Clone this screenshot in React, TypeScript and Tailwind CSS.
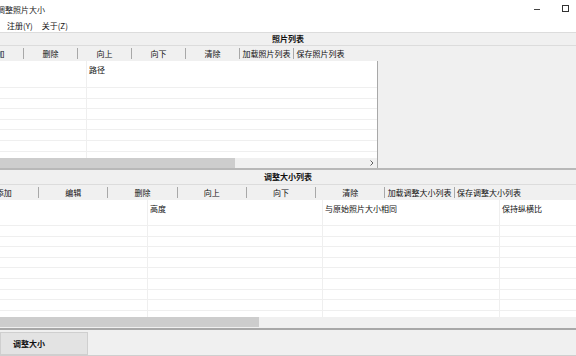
import React from "react";

const font = { fontFamily: '"Noto Sans CJK SC", "Noto Sans", sans-serif' };

function Sep() {
  return <div className="w-px h-[11px] bg-[#a8a8a8] flex-none self-center" />;
}

function TopToolbar() {
  const items = ["添加", "删除", "向上", "向下", "清除", "加载照片列表", "保存照片列表"];
  return (
    <div className="h-[15px] flex items-center overflow-hidden bg-[#f0f0f0]">
      <div className="flex items-center ml-[-30px]">
        {items.map((t, i) => (
          <React.Fragment key={t}>
            <div className="w-[53px] flex-none text-center leading-[15px] text-[8px] text-[#111]">{t}</div>
            {i < items.length - 1 && <Sep />}
          </React.Fragment>
        ))}
      </div>
    </div>
  );
}

function BottomToolbar() {
  const items = ["添加", "编辑", "删除", "向上", "向下", "清除", "加载调整大小列表", "保存调整大小列表"];
  return (
    <div className="h-[15px] flex items-center overflow-hidden bg-[#f0f0f0]">
      <div className="flex items-center ml-[-30.3px]">
        {items.map((t, i) => (
          <React.Fragment key={t}>
            <div className="w-[68.3px] flex-none text-center leading-[15px] text-[8px] text-[#111] whitespace-nowrap">{t}</div>
            {i < items.length - 1 && <Sep />}
          </React.Fragment>
        ))}
      </div>
    </div>
  );
}

function Rows({ cols, first, firstH, n }: { cols: string[]; first: string[]; firstH: string; n: number }) {
  const rows = Array.from({ length: n });
  return (
    <div className="flex flex-col">
      <div className={`flex ${firstH} border-b border-[#efefef] flex-none`}>
        {cols.map((c, i) => (
          <div key={i} className={`${c} flex-none pt-[4px] pl-[2px] leading-[10px] text-[8px] text-[#111] whitespace-nowrap ${i < cols.length - 1 ? "border-r border-[#efefef]" : ""}`}>
            {first[i]}
          </div>
        ))}
      </div>
      {rows.map((_, r) => (
        <div key={r} className="flex h-[10.6px] border-b border-[#efefef] flex-none">
          {cols.map((c, i) => (
            <div key={i} className={`${c} flex-none ${i < cols.length - 1 ? "border-r border-[#efefef]" : ""}`} />
          ))}
        </div>
      ))}
    </div>
  );
}

export default function App() {
  return (
    <div className="w-[576px] h-[356px] bg-[#f0f0f0] overflow-hidden flex flex-col" style={font}>
      {/* title bar */}
      <div className="h-[19px] bg-white flex items-center justify-between flex-none">
        <div className="ml-[-3px] text-[8px] text-[#222] leading-[19px]">调整照片大小</div>
        <div className="flex items-center">
          <div className="w-[6px] h-px bg-[#444] mr-[22px]" />
          <div className="w-[7px] h-[7px] border border-[#333] mr-[7px] mb-[2px]" />
        </div>
      </div>
      {/* menu */}
      <div className="h-[13px] bg-white flex items-center flex-none text-[8px] text-[#111]">
        <span className="ml-[7px]">注册(Y)</span>
        <span className="ml-[9px]">关于(Z)</span>
      </div>
      <div className="h-px bg-[#dcdcdc] flex-none" />
      {/* header 1 */}
      <div className="h-[12px] flex items-center justify-center text-[8px] font-bold text-[#111] flex-none leading-[12px]">照片列表</div>
      <div className="h-px bg-[#dcdcdc] flex-none" />
      <TopToolbar />
      {/* top section */}
      <div className="h-[107px] flex flex-none">
        <div className="w-[378px] border-r border-[#a8a8a8] flex flex-col flex-none">
          <div className="h-[97px] bg-white overflow-hidden">
            <Rows cols={["w-[87px]", "flex-1"]} first={["", "路径"]} firstH="h-[27px]" n={8} />
          </div>
          <div className="h-[10px] bg-[#f0f0f0] flex items-center relative">
            <div className="w-[235px] h-full bg-[#cdcdcd]" />
            <div className="flex-1" />
            <svg width="4" height="6" viewBox="0 0 4 6" className="mr-[3px]">
              <path d="M0.5 0.5 L3 3 L0.5 5.5" stroke="#606060" strokeWidth="1" fill="none" />
            </svg>
          </div>
        </div>
        <div className="flex-1 bg-[#f0f0f0]" />
      </div>
      <div className="h-[2px] bg-[#b8b8b8] flex-none" />
      {/* header 2 */}
      <div className="h-[14px] flex items-center justify-center text-[8px] font-bold text-[#111] flex-none leading-[14px]">调整大小列表</div>
      <div className="h-px bg-[#dcdcdc] flex-none" />
      <BottomToolbar />
      {/* bottom list */}
      <div className="h-[117px] bg-white overflow-hidden flex-none">
        <Rows
          cols={["w-[148px]", "w-[175px]", "w-[177px]", "flex-1"]}
          first={["", "高度", "与原始照片大小相同", "保持纵横比"]}
          firstH="h-[26px]"
          n={10}
        />
      </div>
      <div className="h-[10px] bg-[#f0f0f0] flex flex-none">
        <div className="w-[259px] h-full bg-[#cdcdcd]" />
      </div>
      <div className="h-px bg-[#f0f0f0] flex-none" />
      <div className="h-[2px] bg-[#a8a8a8] flex-none" />
      {/* tab area */}
      <div className="h-[26px] flex-none bg-[#f0f0f0] flex flex-col">
        <div className="h-[2px]" />
        <div className="w-[88px] h-[23px] bg-[#e3e3e3] border border-[#cfcfcf] flex items-center pl-[12px] text-[8px] font-bold text-[#111]">
          调整大小
        </div>
        <div className="h-px bg-[#cfcfcf]" />
      </div>
    </div>
  );
}
